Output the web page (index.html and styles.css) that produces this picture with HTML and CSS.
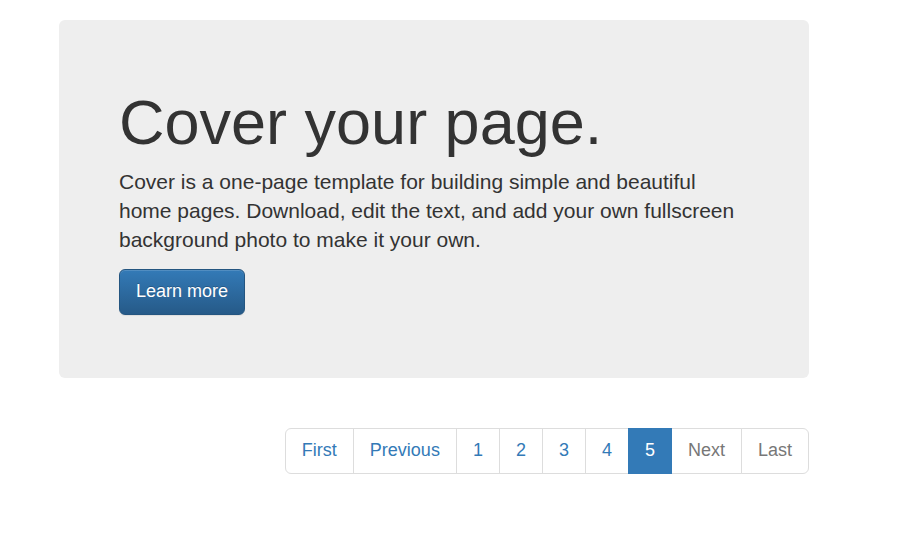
FILE: index.html
```html
<!DOCTYPE html>
<html lang="en">
<head>
  <meta charset="UTF-8">
  <title>Cover</title>
  <link rel="stylesheet" href="styles.css">
</head>
<body>
  <div class="page">
    <div class="jumbotron">
      <h1>Cover your page.</h1>
      <p>Cover is a one-page template for building simple and beautiful home pages. Download, edit the text, and add your own fullscreen background photo to make it your own.</p>
      <p><a class="btn-primary" href="#">Learn more</a></p>
    </div>

    <div class="pager-row">
      <ul class="pagination">
        <li><a href="#">First</a></li>
        <li><a href="#">Previous</a></li>
        <li><a href="#">1</a></li>
        <li><a href="#">2</a></li>
        <li><a href="#">3</a></li>
        <li><a href="#">4</a></li>
        <li class="active"><span>5</span></li>
        <li class="disabled"><span>Next</span></li>
        <li class="disabled"><span>Last</span></li>
      </ul>
    </div>
  </div>
</body>
</html>
```

FILE: styles.css
```css
body {
  margin: 0;
  font-family: "Liberation Sans", Arial, Helvetica, sans-serif;
  font-size: 14px;
  line-height: 1.42857;
  color: #333;
  background: #fff;
}
.page {
  width: 750px;
  padding: 20px 0 0 59px;
}
.jumbotron {
  background-color: #eee;
  border-radius: 6px;
  padding: 48px 60px;
  margin-bottom: 30px;
}
.jumbotron h1 {
  font-size: 63px;
  font-weight: 500;
  line-height: 1.1;
  margin: 20px 0 10px;
}
.jumbotron p {
  font-size: 21px;
  line-height: 29px;
  margin: 0 0 15px;
  width: 625px;
}
.btn-primary {
  display: inline-block;
  padding: 10px 16px;
  font-size: 18px;
  line-height: 1.3333;
  color: #fff;
  text-decoration: none;
  border: 1px solid #245580;
  border-radius: 6px;
  background-image: linear-gradient(to bottom, #337ab7 0, #265a88 100%);
  box-shadow: inset 0 1px 0 rgba(255, 255, 255, 0.15), 0 1px 1px rgba(0, 0, 0, 0.075);
  text-shadow: 0 -1px 0 rgba(0, 0, 0, 0.2);
}
.pager-row {
  display: flex;
  justify-content: flex-end;
}
.pagination {
  display: flex;
  list-style: none;
  padding: 0;
  margin: 20px 0;
}
.pagination li a,
.pagination li span {
  display: block;
  padding: 10px 16px;
  font-size: 18px;
  line-height: 1.3333;
  color: #337ab7;
  text-decoration: none;
  background: #fff;
  border: 1px solid #ddd;
  margin-left: -1px;
}
.pagination li:first-child a {
  margin-left: 0;
  border-radius: 6px 0 0 6px;
}
.pagination li:last-child span {
  border-radius: 0 6px 6px 0;
}
.pagination .active span {
  color: #fff;
  background: #337ab7;
  border-color: #337ab7;
  position: relative;
}
.pagination .disabled span {
  color: #777;
}
```
